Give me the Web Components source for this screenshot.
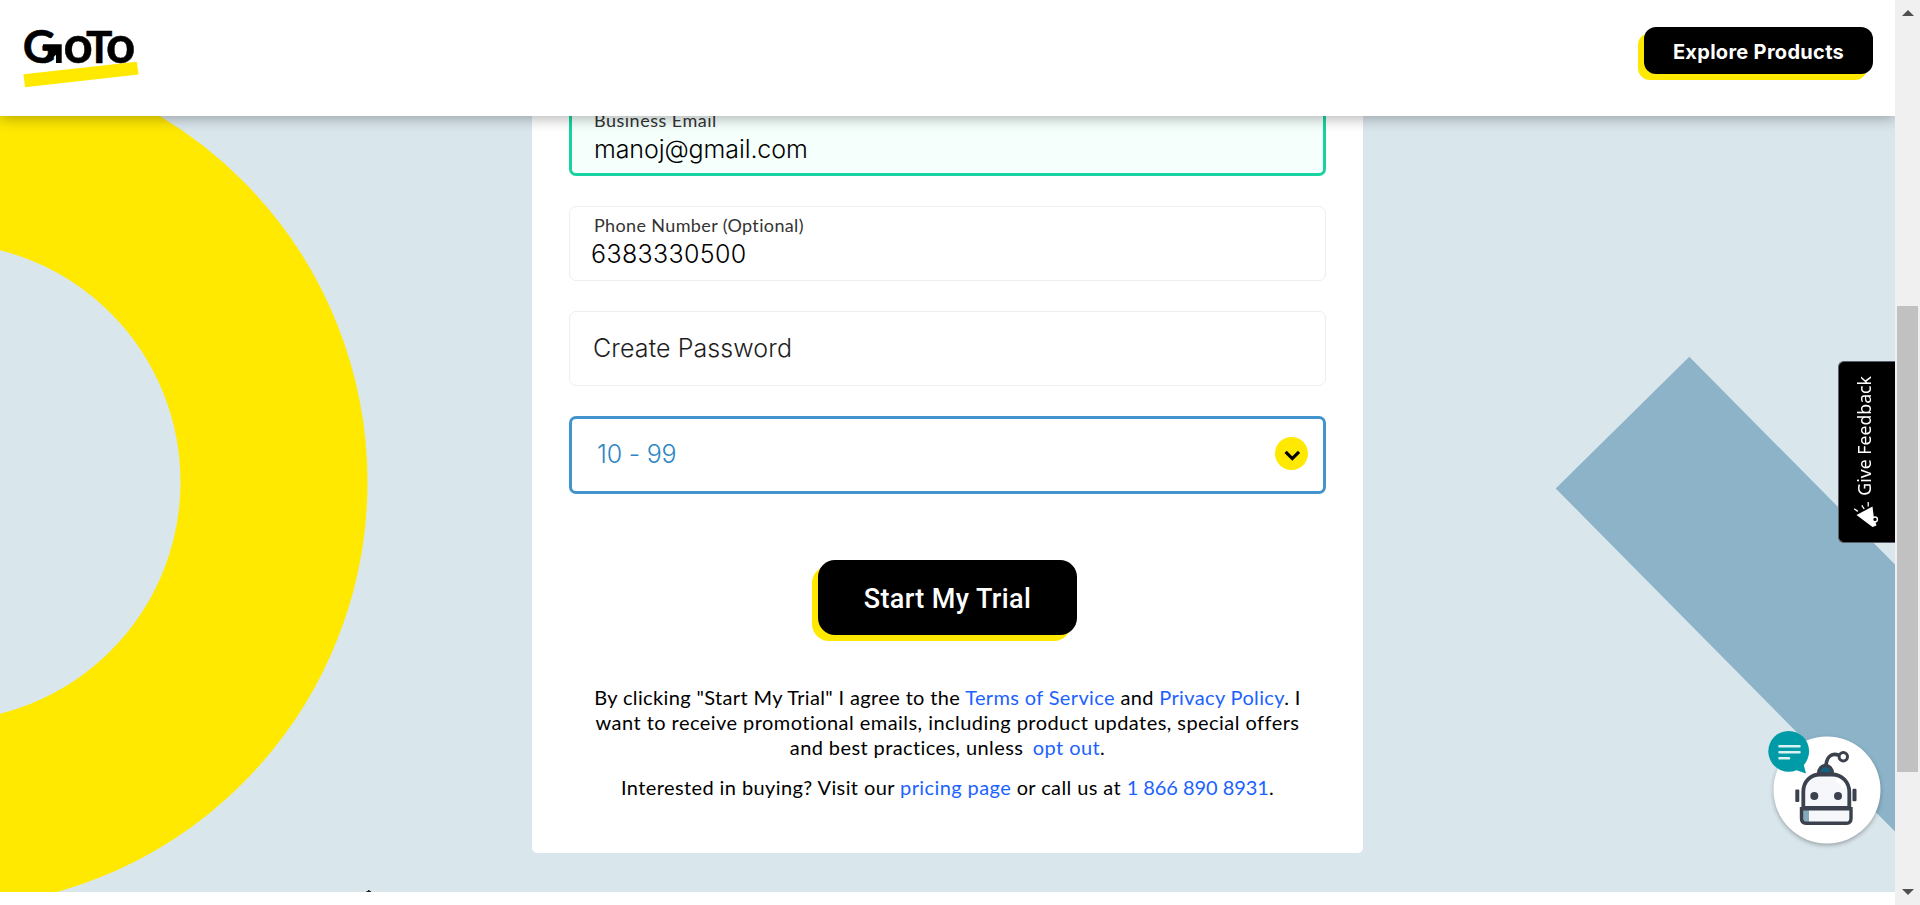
<!DOCTYPE html>
<html lang="en">
<head>
<meta charset="utf-8">
<title>GoTo - Start My Trial</title>
<style>
html,body{margin:0;height:100%;overflow:hidden}
body{font-family:Lato,"Liberation Sans",sans-serif;color:#000}
</style>
</head>
<body>
<trial-page></trial-page>
<script>
const define = (name, html) => {
  const t = document.createElement('template');
  t.innerHTML = html;
  customElements.define(name, class extends HTMLElement {
    constructor() {
      super();
      this.attachShadow({mode: 'open'}).appendChild(t.content.cloneNode(true));
    }
  });
};

define('goto-logo', `
<style>:host{display:block;width:116px;height:60px}svg{display:block;overflow:visible}
text{font-family:Lato,sans-serif;font-weight:700;stroke:#000;stroke-width:.5}</style>
<svg width="116" height="60" viewBox="23 29 116 60" role="img">
  <polygon points="23.4,74.2 136.8,61.8 138.6,74.6 25,87.2" fill="#ffe900"/>
  <text y="62.800"><tspan x="22.8" font-size="45.500">G</tspan><tspan x="63.4" font-size="51">o</tspan><tspan x="86" font-size="44">T</tspan><tspan x="106" font-size="51">o</tspan></text>
  <path d="M43 44.200H61.700V63H56V54.800L48 62.300 44.500 58.200 51.500 50H43Z" fill="#000"/>
</svg>`);

define('shadow-button', `
<style>
:host{display:inline-flex;align-items:center;justify-content:center;box-sizing:border-box;background:#000;color:#fff;
  box-shadow:-6px 6px 0 #ffe900;white-space:nowrap}
</style><slot></slot>`);

define('site-header', `
<style>
:host{display:flex;align-items:flex-start;justify-content:space-between;height:116px;box-sizing:border-box;
  padding:27px 22px 0 23px;background:#fff;box-shadow:0 2px 14px rgba(0,0,0,.32);position:relative;z-index:2}
goto-logo{margin-top:2px}
shadow-button{width:229px;height:47px;border-radius:12px;font:700 20px Inter,sans-serif;letter-spacing:.3px;padding-top:2px}
</style>
<goto-logo></goto-logo><shadow-button>Explore Products</shadow-button>`);

define('form-field', `
<style>
:host{display:flex;flex-direction:column;box-sizing:border-box;height:75px;border:1px solid #eee;border-radius:7px;
  padding:8px 0 0 24px;background:#fff;font:300 25px/30px Inter,sans-serif}
:host([valid]){height:78px;border:3px solid #18d3a1;background:#f5fffc;padding:9px 0 0 22px}
:host([empty]){justify-content:center;padding:0 0 1px 23px;color:#1e1e22}
:host([select]){height:78px;border:3px solid #4393cc;flex-direction:row;align-items:center;justify-content:space-between;
  padding:0 15px 2px 25px;color:#2f86c4}
::slotted([slot=label]){font:400 18px/20px Lato,sans-serif;margin-bottom:4px;color:#333}
::slotted([slot=icon]){position:relative;top:-1px}
</style>
<slot name="label"></slot><slot></slot><slot name="icon"></slot>`);

define('chevron-badge', `
<style>:host{display:block;width:33px;height:33px}svg{display:block}</style>
<svg width="33" height="33"><circle cx="16.5" cy="16.5" r="16.5" fill="#ffe900"/>
<path d="M10.6 14.9L17.3 21.6 24 14.9" fill="none" stroke="#000" stroke-width="3.2"/></svg>`);

define('page-shapes', `
<style>:host{position:absolute;inset:0}svg{display:block}</style>
<svg width="1895" height="776" viewBox="0 116 1895 776">
  <circle cx="-58.5" cy="482" r="332.5" fill="none" stroke="#ffe900" stroke-width="187"/>
  <polygon points="1689.3,356.8 1555.7,488.4 1895,831.6 1960,897 1960,630 1895,564.5" fill="#8cb3c8"/>
  <path d="M366.5 892V891H368V890H369.5V891H371V892Z" fill="#222"/>
</svg>`);

define('legal-copy', `
<style>
:host{display:block;text-align:center;font-size:20px;line-height:25px}
p{margin:0 0 15px}p:last-child{margin:0}
p span{display:block;white-space:nowrap}
a{color:#1b62ff;text-decoration:none}
.l1{letter-spacing:.36px}.l2{letter-spacing:.45px}.l3{letter-spacing:.4px}.l4{letter-spacing:.4px}
.l3 a{margin-left:4px}.tel{letter-spacing:-.05px}
</style>
<p><span class="l1">By clicking "Start My Trial" I agree to the <a>Terms of Service</a> and <a>Privacy Policy</a>. I</span>
<span class="l2">want to receive promotional emails, including product updates, special offers</span>
<span class="l3">and best practices, unless <a>opt out</a>.</span></p>
<p><span class="l4">Interested in buying? Visit our <a>pricing page</a> or call us at <a class="tel">1 866 890 8931</a>.</span></p>`);

define('trial-form', `
<style>
:host{display:flex;flex-direction:column;align-items:stretch;box-sizing:border-box;width:831px;padding:37px;padding-bottom:53px;
  background:#fff;border-radius:5px;position:relative;flex:none}
.fields{display:flex;flex-direction:column;gap:30px}
shadow-button{align-self:center;width:259px;height:75px;border-radius:17px;margin:66px 0 50px;
  font:500 27px Roboto,sans-serif;letter-spacing:.4px;padding-top:2px}
</style>
<div class="fields">
<form-field valid><span slot="label" style="letter-spacing:.5px">Business Email</span><span style="letter-spacing:-.1px">manoj@gmail.com</span></form-field>
<form-field><span slot="label" style="letter-spacing:.36px">Phone Number (Optional)</span><span style="letter-spacing:.35px;margin-left:-3px">6383330500</span></form-field>
<form-field empty><span style="letter-spacing:.1px">Create Password</span></form-field>
<form-field select><span style="letter-spacing:-.2px">10 - 99</span><chevron-badge slot="icon"></chevron-badge></form-field>
</div>
<shadow-button>Start My Trial</shadow-button>
<legal-copy></legal-copy>`);

define('feedback-tab', `
<style>
:host{display:flex;flex-direction:column;align-items:center;position:absolute;z-index:3;right:0;top:361px;width:57px;height:182px;
  box-sizing:border-box;background:#000;color:#fff;border:1px solid #5b5e66;border-right:0;border-radius:6px 0 0 6px;padding-top:14px}
span{writing-mode:vertical-rl;transform:rotate(180deg);font:17.7px/24px "Noto Sans",sans-serif;white-space:nowrap;margin-right:7px}
svg{margin-top:5px;margin-right:2px}
</style>
<span>Give Feedback</span>
<svg width="26" height="28" viewBox="0 0 26 28"><path d="M3.500 14L19.500 5.500 20.800 16 23.500 24.500 19.500 26Z" fill="#fff"/>
<path d="M1.200 7.800L4.800 10.400M8.800 4.400L11.200 8M15.200 1V5.400" stroke="#fff" stroke-width="1.300" fill="none"/>
<circle cx="22" cy="18.400" r="2.400" fill="#000" stroke="#fff" stroke-width="1.400"/></svg>`);

define('chat-bot', `
<style>:host{display:block;position:absolute;z-index:3;left:1765px;top:728px}svg{display:block;overflow:visible}
.disc{filter:drop-shadow(0 2px 2px rgba(0,0,0,.28))}</style>
<svg width="120" height="120" viewBox="1765 728 120 120">
  <circle class="disc" cx="1827" cy="790" r="53.5" fill="#fff"/>
  <path d="M1826 765C1827 756 1832 753 1838.500 755" fill="none" stroke="#3b424d" stroke-width="3.6"/>
  <circle cx="1843.300" cy="756.700" r="4.200" fill="#fff" stroke="#3b424d" stroke-width="3"/>
  <path d="M1818.500 774C1818.500 762.500 1832.500 762.500 1832.500 774Z" fill="#155f83" stroke="#3b424d" stroke-width="3.400"/>
  <path d="M1803.300 808V792C1803.300 781 1811 774.500 1820 774.500H1832C1842 774.500 1849.300 782 1849.300 792V808Z" fill="#f5f7fb" stroke="#3b424d" stroke-width="3.800"/>
  <path d="M1836 780Q1842 781 1844 788" fill="none" stroke="#fff" stroke-width="4"/>
  <path d="M1801.500 808.800H1851V818.500Q1851 823.300 1846.500 823.300H1806Q1801.500 823.300 1801.500 818.500Z" fill="#f5f7fb"/>
  <path d="M1802 809H1809V823H1802Z" fill="#86a9bc"/>
  <path d="M1801.500 808.800H1851V818.500Q1851 823.300 1846.500 823.300H1806Q1801.500 823.300 1801.500 818.500Z" fill="none" stroke="#3b424d" stroke-width="3.400"/>
  <circle cx="1814.300" cy="796" r="4" fill="#3b424d"/><circle cx="1838" cy="796" r="4" fill="#3b424d"/>
  <rect x="1795.300" y="789.500" width="4" height="12.500" rx="1" fill="#3b424d"/><rect x="1852.500" y="788.700" width="4" height="12.500" rx="1" fill="#3b424d"/>
  <circle cx="1788.700" cy="751.300" r="20.400" fill="#009ba6"/><path d="M1793 769L1806 773.500 1803 762Z" fill="#009ba6"/>
  <path d="M1779.500 746.300H1799.500M1779.500 752.200H1799.500M1779.500 758.200H1789" stroke="#d9f3f3" stroke-width="2.600" stroke-linecap="round"/>
</svg>`);

define('scroll-rail', `
<style>
:host{display:flex;flex-direction:column;align-items:center;background:#f0f0f0;box-sizing:border-box;padding:10px 0 10px}
svg{display:block;flex:none}i{display:block;width:21px;height:466px;background:#c1c1c1;margin-top:290px}
.dn{margin-top:auto}
</style>
<svg width="12" height="6"><path d="M0 6L6 0 12 6Z" fill="#505050"/></svg><i></i>
<svg class="dn" width="12" height="6"><path d="M0 0L6 6 12 0Z" fill="#505050"/></svg>`);

define('trial-page', `
<style>
:host{display:grid;grid-template-columns:minmax(0,1fr) 25px;height:905px;overflow:hidden;background:#fff}
.view{display:flex;flex-direction:column;position:relative;overflow:hidden}
main{position:relative;display:flex;align-items:flex-end;justify-content:center;height:776px;box-sizing:border-box;
  padding-bottom:39px;background:#d9e6ec;overflow:hidden}
</style>
<div class="view">
<site-header></site-header>
<main><page-shapes></page-shapes><trial-form></trial-form></main>
<feedback-tab></feedback-tab><chat-bot></chat-bot>
</div>
<scroll-rail></scroll-rail>`);
</script>
</body>
</html>
